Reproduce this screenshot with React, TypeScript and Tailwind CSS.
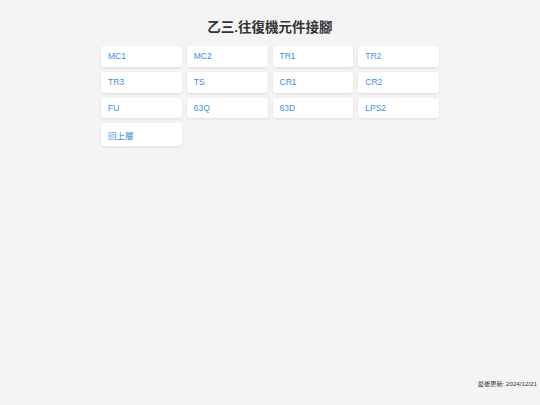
const items = ["MC1", "MC2", "TR1", "TR2", "TR3", "TS", "CR1", "CR2", "FU", "63Q", "63D", "LPS2", "回上層"];

export default function App() {
  return (
    <div
      className="flex min-h-screen flex-col bg-[#f4f4f4] text-[#333]"
      style={{ fontFamily: '"Liberation Sans", "Noto Sans CJK TC", sans-serif' }}
    >
      <main className="flex-1 pt-[19px]">
        <h1 className="text-center text-[13.5px] font-bold leading-[18px] text-[#333]">乙三.往復機元件接腳</h1>
        <div className="mx-auto mt-[9px] grid w-[338px] grid-cols-4 items-start gap-[5px]">
          {items.map((name) => (
            <a
              key={name}
              href="#"
              className="block rounded-[3px] bg-white px-[7px] py-[5.4px] text-[8.5px] leading-[normal] text-[#3a8ee6] shadow-[0_1px_3px_rgba(0,0,0,0.1)]"
            >
              {name}
            </a>
          ))}
        </div>
      </main>
      <footer className="pb-[17px] pr-[3px] text-right text-[6.2px] leading-[8px] text-[#333]">最後更新: 2024/12/21</footer>
    </div>
  );
}
